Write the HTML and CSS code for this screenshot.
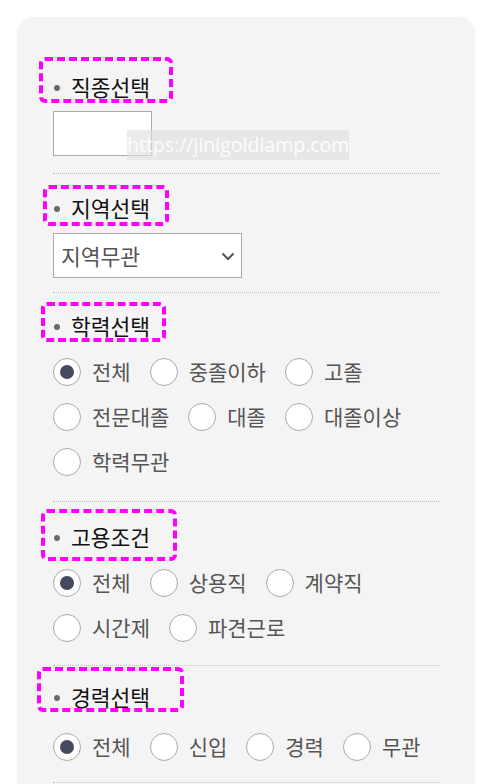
FILE: index.html
```html
<!DOCTYPE html>
<html lang="ko">
<head>
<meta charset="utf-8">
<title>채용 검색</title>
<link rel="stylesheet" href="styles.css">
</head>
<body>
<div class="panel">
  <section class="sec sec-1">
    <div class="heading"><span class="dot"></span>직종선택<span class="mark mark-1"></span></div>
    <div class="textbox"></div>
    <div class="watermark">https://jinigoldlamp.com</div>
  </section>
  <section class="sec sec-2">
    <div class="heading"><span class="dot"></span>지역선택<span class="mark mark-2"></span></div>
    <div class="select">
      <span>지역무관</span>
      <svg class="chev" width="14" height="9" viewBox="0 0 14 9"><path d="M1.5 1.5 L7 7 L12.5 1.5" fill="none" stroke="#555" stroke-width="2"/></svg>
    </div>
  </section>
  <section class="sec sec-3">
    <div class="heading"><span class="dot"></span>학력선택<span class="mark mark-3"></span></div>
    <div class="radios">
      <label class="opt"><span class="radio on"></span>전체</label>
      <label class="opt"><span class="radio"></span>중졸이하</label>
      <label class="opt"><span class="radio"></span>고졸</label>
      <label class="opt"><span class="radio"></span>전문대졸</label>
      <label class="opt"><span class="radio"></span>대졸</label>
      <label class="opt"><span class="radio"></span>대졸이상</label>
      <label class="opt"><span class="radio"></span>학력무관</label>
    </div>
  </section>
  <section class="sec sec-4">
    <div class="heading"><span class="dot"></span>고용조건<span class="mark mark-4"></span></div>
    <div class="radios">
      <label class="opt"><span class="radio on"></span>전체</label>
      <label class="opt"><span class="radio"></span>상용직</label>
      <label class="opt"><span class="radio"></span>계약직</label>
      <label class="opt"><span class="radio"></span>시간제</label>
      <label class="opt"><span class="radio"></span>파견근로</label>
    </div>
  </section>
  <section class="sec sec-5">
    <div class="heading"><span class="dot"></span>경력선택<span class="mark mark-5"></span></div>
    <div class="radios">
      <label class="opt"><span class="radio on"></span>전체</label>
      <label class="opt"><span class="radio"></span>신입</label>
      <label class="opt"><span class="radio"></span>경력</label>
      <label class="opt"><span class="radio"></span>무관</label>
    </div>
  </section>
</div>
</body>
</html>
```
FILE: styles.css
```css
html, body {
  margin: 0;
  padding: 0;
  background: #ffffff;
}
body {
  font-family: "Noto Sans CJK KR", "Noto Sans", sans-serif;
  overflow: hidden;
}
.panel {
  margin: 17px 13px 0 17px;
  width: 386px;
  padding: 37px 36px 40px 36px;
  background: #f4f4f4;
  border-radius: 16px;
}
.sec {
  position: relative;
  padding: 18px 0 15px 0;
  border-bottom: 1px dotted #bdbdbd;
}
.sec-1 { padding-bottom: 17px; }
.sec-2 { padding-top: 19px; padding-bottom: 14px; }
.sec-3 { padding-bottom: 17px; }
.sec-4 { padding-top: 20px; }
.sec-5 { padding-top: 16px; padding-bottom: 13px; }
.heading {
  position: relative;
  display: flex;
  align-items: center;
  height: 30px;
  font-size: 21.5px;
  color: #111;
  line-height: 30px;
}
.dot {
  width: 6px;
  height: 6px;
  border-radius: 50%;
  background: #6a6a6a;
  margin: 2px 11px 0 1px;
}
.mark {
  position: absolute;
  border: 4px dashed #ff00ff;
  border-radius: 6px;
  box-sizing: border-box;
}
.mark-1 { left: -14px; top: -15px; width: 134px; height: 46px; }
.mark-2 { left: -10px; top: -8px; width: 126px; height: 41px; }
.mark-3 { left: -12px; top: -9px; width: 125px; height: 40px; }
.mark-4 { left: -12px; top: -13px; width: 136px; height: 52px; }
.mark-5 { left: -16px; top: -15px; width: 147px; height: 45px; }
.textbox {
  margin-top: 9px;
  width: 97px;
  height: 43px;
  background: #fff;
  border: 1px solid #aaaaaa;
}
.watermark {
  position: absolute;
  left: 74px;
  top: 76px;
  width: 222px;
  height: 30px;
  box-sizing: border-box;
  padding-left: 0;
  background: rgba(222, 222, 222, 0.62);
  color: rgba(255, 255, 255, 0.92);
  font-family: "Open Sans", sans-serif;
  font-size: 19.5px;
  line-height: 30px;
  white-space: nowrap;
}
.select {
  margin-top: 10px;
  height: 43px;
  background: #fff;
  border: 1px solid #aaaaaa;
  display: flex;
  align-items: center;
  justify-content: space-between;
  padding: 0 6px 0 7px;
  box-sizing: content-box;
  width: 174px;
  font-size: 21.5px;
  color: #555;
}
.chev { display: block; margin-top: 1px; }
.radios {
  margin-top: 8px;
  margin-right: -14px;
  display: flex;
  flex-wrap: wrap;
}
.sec-5 .radios { margin-top: 12px; }
.opt {
  display: flex;
  align-items: center;
  height: 45px;
  margin-right: 19px;
  font-size: 21px;
  color: #555;
  line-height: 1;
}
.radio {
  position: relative;
  width: 26px;
  height: 26px;
  border: 1px solid #aaaaaa;
  border-radius: 50%;
  background: #fff;
  margin-right: 11px;
  flex: none;
}
.radio.on::after {
  content: "";
  position: absolute;
  left: 6px;
  top: 6px;
  width: 14px;
  height: 14px;
  border-radius: 50%;
  background: #474a5e;
}
```
